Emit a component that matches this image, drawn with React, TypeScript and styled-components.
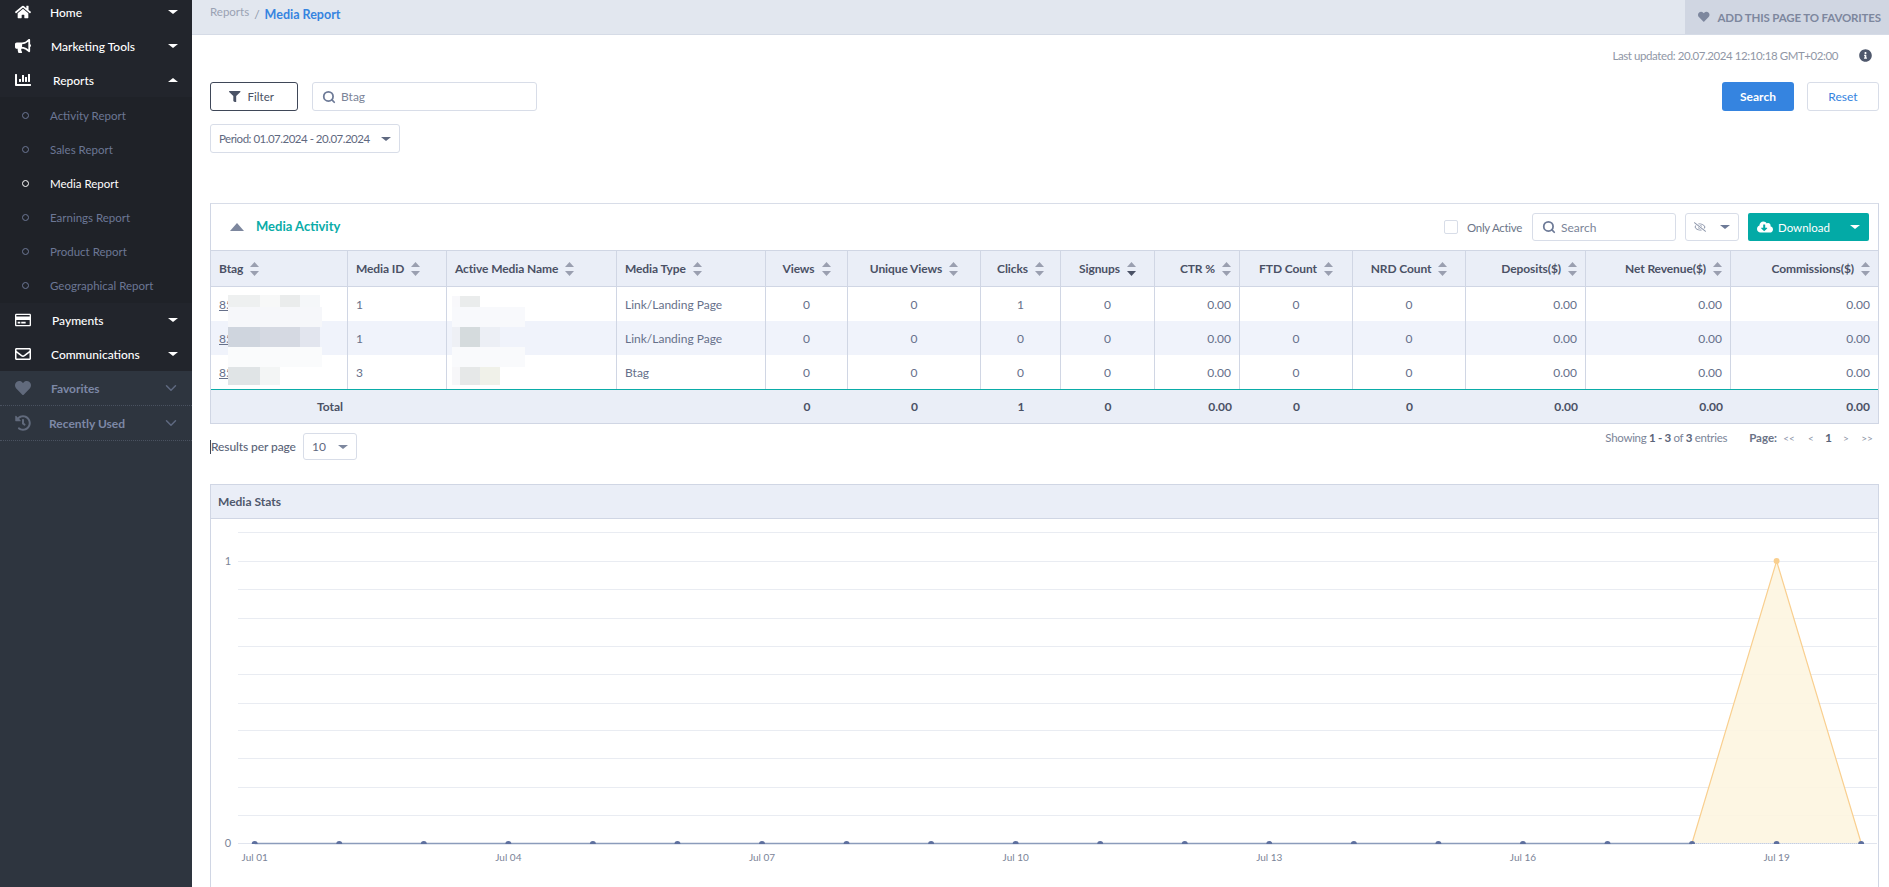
import styled, { createGlobalStyle } from 'styled-components';
import type { ReactNode } from 'react';
import {
  FaHome,
  FaBullhorn,
  FaChartBar,
  FaRegCreditCard,
  FaRegEnvelope,
  FaHeart,
  FaHistory,
  FaFilter,
  FaInfoCircle,
  FaCloudDownloadAlt,
  FaRegEyeSlash,
} from 'react-icons/fa';
import { FiChevronDown, FiSearch } from 'react-icons/fi';

const GlobalStyle = createGlobalStyle`
  html, body {
    margin: 0;
    padding: 0;
    height: 887px;
    overflow: hidden;
    background: #fff;
    font-family: Lato, "Noto Sans", "Liberation Sans", sans-serif;
    font-size: 12px;
    color: #5f6980;
  }
  * { box-sizing: border-box; }
`;

const Page = styled.div`
  display: flex;
  height: 887px;
  overflow: hidden;
`;

/* sidebar */
const Sidebar = styled.aside`
  width: 192px;
  flex: none;
  background: #2e353f;
`;

const MainMenu = styled.div`
  margin-top: -5px;
  background: #22252c;
`;

const MenuRow = styled.div`
  height: 34px;
  display: flex;
  align-items: center;
  color: #fff;
  font-weight: 500;
  font-size: 12px;
  position: relative;
`;

const MenuIcon = styled.span`
  width: 50px;
  padding-left: 15px;
  flex: none;
  display: flex;
  font-size: 16px;
`;

const MenuLabel = styled.span<{ $nudge?: number }>`
  margin-left: ${p => p.$nudge ?? 0}px;
  flex: 1;
`;

const SubMenu = styled.div`
  background: #1f2228;
  padding: 1px 0;
`;

const SubRow = styled.div<{ $active?: boolean }>`
  height: 34px;
  display: flex;
  align-items: center;
  font-size: 11.5px;
  color: ${p => (p.$active ? '#fff' : '#6c7795')};
`;

const SubDot = styled.span`
  width: 7px;
  height: 7px;
  border: 1.5px solid currentColor;
  border-radius: 50%;
  margin: 0 21px 0 22px;
`;

const SecondaryRow = styled.div`
  height: 35px;
  display: flex;
  align-items: center;
  color: #7d88a6;
  font-weight: 700;
  font-size: 12px;
  border-bottom: 1px dotted #4a5260;
`;

const DimIcon = styled(MenuIcon)`
  color: #616a7c;
`;

const ChevronSlot = styled.span`
  margin-right: 12px;
  display: flex;
  font-size: 18px;
  color: #5f6980;
  stroke-width: 3;
`;

const Caret = styled.span<{ $up?: boolean; $color?: string; $size?: number }>`
  display: inline-block;
  flex: none;
  width: 0;
  height: 0;
  border-left: ${p => p.$size ?? 5}px solid transparent;
  border-right: ${p => p.$size ?? 5}px solid transparent;
  ${p => (p.$up ? 'border-bottom' : 'border-top')}: ${p => (p.$size ?? 5) - 1}px solid ${p => p.$color ?? '#fff'};
`;

const MenuCaret = styled(Caret)`
  margin-right: 14px;
`;

const SectionCaret = styled(Caret)`
  border-bottom-width: 8px;
`;

/* top bar */
const Main = styled.main`
  flex: 1;
  min-width: 0;
`;

const TopBar = styled.header`
  height: 35px;
  display: flex;
  justify-content: space-between;
  background: #e2e7ef;
  border-bottom: 1px solid #d5dbe6;
  padding-left: 18px;
`;

const Crumbs = styled.div`
  display: flex;
  align-items: baseline;
  padding-top: 4px;
`;

const CrumbRoot = styled.span`
  color: #9aa2b3;
  font-size: 11.5px;
`;

const CrumbSep = styled.span`
  color: #8d97aa;
  margin: 0 5px 0 5px;
  position: relative;
  top: 3px;
`;

const CrumbCurrent = styled.span`
  color: #3584e0;
  font-weight: 700;
  font-size: 12.5px;
  position: relative;
  top: 3px;
`;

const FavoriteButton = styled.div`
  width: 204px;
  height: 34px;
  display: flex;
  align-items: center;
  gap: 8px;
  padding-left: 13px;
  background: #d0d6e2;
  color: #7d879e;
  font-weight: 700;
  font-size: 11.5px;
  letter-spacing: -0.15px;
  text-transform: uppercase;
  white-space: nowrap;
`;

/* content */
const Content = styled.div`
  padding: 0 10px 0 18px;
`;

const MetaRow = styled.div`
  height: 20px;
  margin-top: 10px;
  display: flex;
  justify-content: flex-end;
  align-items: center;
  color: #9097a6;
  font-size: 11.5px;
  letter-spacing: -0.42px;
  gap: 21px;
  padding-right: 7px;
`;

const InfoIcon = styled(FaInfoCircle)`
  color: #4f586c;
  font-size: 13px;
`;

const FilterRow = styled.div`
  margin-top: 17px;
  display: flex;
  align-items: center;
`;

const FilterButton = styled.div`
  width: 88px;
  height: 29px;
  display: flex;
  align-items: center;
  justify-content: center;
  gap: 7px;
  border: 1px solid #3f4758;
  border-radius: 3px;
  color: #4a5265;
  font-size: 11.5px;
  padding-right: 5px;
`;

const InputBox = styled.div<{ $width: number; $height?: number }>`
  width: ${p => p.$width}px;
  height: ${p => p.$height ?? 29}px;
  display: flex;
  align-items: center;
  gap: 5px;
  padding-left: 9px;
  border: 1px solid #d8dde8;
  border-radius: 3px;
  color: #7b8498;
  background: #fff;
`;

const SearchGlyph = styled(FiSearch)`
  color: #6d7a97;
  font-size: 14px;
  stroke-width: 3;
`;

const BtagInput = styled(InputBox)`
  margin-left: 14px;
`;

const RightGroup = styled.div`
  margin-left: auto;
  display: flex;
  gap: 13px;
`;

const PrimaryButton = styled.div`
  width: 72px;
  height: 29px;
  display: flex;
  align-items: center;
  justify-content: center;
  border-radius: 3px;
  background: #3584e0;
  color: #fff;
  font-weight: 700;
`;

const GhostButton = styled(PrimaryButton)`
  background: #fff;
  border: 1px solid #d8dde8;
  color: #3584e0;
  font-weight: 400;
`;

const SelectBox = styled.div<{ $width: number; $height?: number }>`
  width: ${p => p.$width}px;
  height: ${p => p.$height ?? 29}px;
  display: flex;
  align-items: center;
  justify-content: space-between;
  padding: 0 8px;
  border: 1px solid #d8dde8;
  border-radius: 3px;
  color: #5f6980;
  white-space: nowrap;
`;

const PeriodSelect = styled(SelectBox)`
  margin-top: 13px;
  font-size: 11.5px;
  letter-spacing: -0.5px;
`;

/* activity table */
const Section = styled.section`
  position: relative;
  margin-top: 50px;
  border: 1px solid #d0d6e4;
  border-top-color: #d8dde8;
`;

const SectionHead = styled.div`
  height: 46px;
  display: flex;
  align-items: center;
  padding: 0 9px 0 19px;
`;

const SectionTitle = styled.span`
  margin-left: 12px;
  color: #0aaca8;
  font-weight: 700;
  font-size: 13px;
  position: relative;
  top: -1px;
`;

const HeadTools = styled.div`
  margin-left: auto;
  display: flex;
  align-items: center;
`;

const CheckBox = styled.span`
  width: 14px;
  height: 14px;
  border: 1px solid #d8dde8;
  border-radius: 2px;
  margin-right: 9px;
`;

const OnlyActive = styled.span`
  margin-right: 10px;
  color: #6d7689;
  font-size: 11.5px;
  letter-spacing: -0.3px;
`;

const ToolSelect = styled(SelectBox)`
  margin: 0 9px;
  color: #8a93a8;
`;

const DownloadButton = styled.div`
  width: 121px;
  height: 28px;
  display: flex;
  align-items: center;
  padding: 0 9px;
  gap: 5px;
  border-radius: 2px;
  background: #03aaa6;
  color: #fff;
  font-size: 11.5px;
`;

const DownloadCaret = styled(Caret)`
  margin-left: auto;
`;

const Table = styled.table`
  width: 1667px;
  table-layout: fixed;
  border-collapse: separate;
  border-spacing: 0;
`;

const HeadCell = styled.th<{ $align: string }>`
  height: 37px;
  padding: 0 8px;
  background: #eaeef7;
  border-top: 1px solid #d0d6e4;
  border-bottom: 1px solid #d0d6e4;
  border-right: 1px solid #d0d6e4;
  text-align: ${p => p.$align};
  color: #4a5165;
  font-weight: 700;
  font-size: 12px;
  letter-spacing: -0.1px;
  white-space: nowrap;
  &:last-child { border-right: 0; }
`;

const SortIcon = styled.svg`
  width: 9px;
  height: 14px;
  margin-left: 7px;
  vertical-align: -3px;
`;

const Row = styled.tr<{ $striped: boolean }>`
  background: ${p => (p.$striped ? '#f0f3fb' : '#fff')};
`;

const BodyCell = styled.td<{ $align: string }>`
  height: 34px;
  padding: 0 8px;
  border-right: 1px solid #d0d6e4;
  text-align: ${p => p.$align};
  color: #66708a;
  font-size: 12px;
  &:last-child { border-right: 0; }
`;

const BtagLink = styled.span`
  text-decoration: underline;
`;

const TotalCell = styled.td<{ $align: string }>`
  height: 34px;
  padding: 0 8px;
  background: #eaeef7;
  border-top: 1px solid #0aaca8;
  text-align: ${p => p.$align};
  color: #4a5165;
  font-weight: 700;
`;

const TotalLabel = styled(TotalCell)`
  padding-right: 5px;
`;

/* redacted patches lying over the cells */
const Smudge = styled.span<{ $x: number; $y: number; $w: number; $h: number; $c: string }>`
  position: absolute;
  left: ${p => p.$x - 211}px;
  top: ${p => p.$y - 204}px;
  width: ${p => p.$w}px;
  height: ${p => p.$h}px;
  background: ${p => p.$c};
`;

/* pager */
const FooterRow = styled.div`
  margin-top: 9px;
  height: 27px;
  display: flex;
  justify-content: space-between;
`;

const PerPage = styled.div`
  display: flex;
  align-items: center;
  color: #5b6478;
`;

const PerPageLabel = styled.span`
  width: 93px;
  border-left: 1px solid #3f4758;
  line-height: 14px;
  letter-spacing: -0.1px;
  font-weight: 500;
`;

const Pager = styled.div`
  display: flex;
  color: #7b8498;
  padding-right: 1px;
  line-height: 10px;
`;

const Showing = styled.span`
  font-size: 11.5px;
  letter-spacing: -0.3px;
`;

const ShowingStrong = styled.b`
  color: #5b6478;
`;

const PageLabel = styled.b`
  color: #6b7387;
  margin-left: 22px;
  font-size: 11.5px;
`;

const PageLink = styled.span<{ $width: number; $current?: boolean }>`
  width: ${p => p.$width}px;
  text-align: center;
  font-size: ${p => (p.$current ? 12 : 10)}px;
  font-weight: ${p => (p.$current ? 700 : 400)};
  color: ${p => (p.$current ? '#5b6478' : '#8b93a6')};
`;

/* stats */
const StatsPanel = styled.section`
  margin-top: 24px;
  border: 1px solid #d0d6e4;
  border-bottom: 0;
`;

const StatsHead = styled.div`
  height: 34px;
  display: flex;
  align-items: center;
  padding-left: 7px;
  background: #eaeef7;
  border-bottom: 1px solid #d0d6e4;
  color: #4f586c;
  font-weight: 700;
  font-size: 12px;
`;

const ChartSvg = styled.svg`
  display: block;
  width: 1667px;
  height: 368px;
  font-family: Lato, "Noto Sans", "Liberation Sans", sans-serif;
`;

const columns: { title: string; width: number; align: string; sort?: boolean }[] = [
  { title: 'Btag', width: 137, align: 'left' },
  { title: 'Media ID', width: 99, align: 'left' },
  { title: 'Active Media Name', width: 170, align: 'left' },
  { title: 'Media Type', width: 149, align: 'left' },
  { title: 'Views', width: 82, align: 'center' },
  { title: 'Unique Views', width: 133, align: 'center' },
  { title: 'Clicks', width: 80, align: 'center' },
  { title: 'Signups', width: 94, align: 'center', sort: true },
  { title: 'CTR %', width: 85, align: 'right' },
  { title: 'FTD Count', width: 113, align: 'center' },
  { title: 'NRD Count', width: 113, align: 'center' },
  { title: 'Deposits($)', width: 120, align: 'right' },
  { title: 'Net Revenue($)', width: 145, align: 'right' },
  { title: 'Commissions($)', width: 147, align: 'right' },
];

const rows = [
  ['85', '1', '', 'Link/Landing Page', '0', '0', '1', '0', '0.00', '0', '0', '0.00', '0.00', '0.00'],
  ['85', '1', '', 'Link/Landing Page', '0', '0', '0', '0', '0.00', '0', '0', '0.00', '0.00', '0.00'],
  ['85', '3', '', 'Btag', '0', '0', '0', '0', '0.00', '0', '0', '0.00', '0.00', '0.00'],
];

const totals = ['Total', '', '', '', '0', '0', '1', '0', '0.00', '0', '0', '0.00', '0.00', '0.00'];

const smudges: [number, number, number, number, string][] = [
  [228, 295, 32, 12, '#eef0f0'],
  [260, 295, 20, 12, '#f7f8f8'],
  [280, 295, 20, 12, '#eaecec'],
  [300, 295, 20, 12, '#f5f7f9'],
  [228, 307, 94, 20, '#f6f7fa'],
  [228, 327, 32, 20, '#cfd5de'],
  [260, 327, 40, 20, '#d5d9e2'],
  [300, 327, 20, 20, '#e2e5ee'],
  [228, 347, 94, 20, '#fafbfc'],
  [228, 367, 32, 18, '#e0e4e6'],
  [260, 367, 20, 18, '#f3f5f5'],
  [452, 296, 8, 11, '#f8f8fb'],
  [460, 296, 20, 11, '#eaecec'],
  [452, 307, 73, 20, '#f8f9fc'],
  [452, 327, 8, 20, '#eef0f5'],
  [460, 327, 20, 20, '#d5dbdd'],
  [480, 327, 20, 20, '#eceff5'],
  [452, 347, 73, 20, '#f9fafc'],
  [452, 367, 8, 18, '#f7f7f9'],
  [460, 367, 20, 18, '#e6e8e8'],
  [480, 367, 20, 18, '#f0f1e9'],
];

const gridLines = [533, 562, 590, 619, 647, 675, 704, 731, 759, 788, 816];
const pointX = Array.from({ length: 20 }, (_, i) => 254.7 + i * 84.55);
const xLabels = ['Jul 01', 'Jul 04', 'Jul 07', 'Jul 10', 'Jul 13', 'Jul 16', 'Jul 19'];

function Sort({ active }: { active?: boolean }) {
  return (
    <SortIcon viewBox="0 0 9 14">
      <path d="M4.5 0 L9 5 H0 Z" fill="#9a9fb0" />
      <path d="M4.5 14 L9 9 H0 Z" fill={active ? '#4a5165' : '#9a9fb0'} />
    </SortIcon>
  );
}

function Menu({ icon, label, nudge, up }: { icon: ReactNode; label: string; nudge?: number; up?: boolean }) {
  return (
    <MenuRow>
      <MenuIcon>{icon}</MenuIcon>
      <MenuLabel $nudge={nudge}>{label}</MenuLabel>
      <MenuCaret $up={up} />
    </MenuRow>
  );
}

function Secondary({ icon, label, nudge }: { icon: ReactNode; label: string; nudge?: number }) {
  return (
    <SecondaryRow>
      <DimIcon>{icon}</DimIcon>
      <MenuLabel $nudge={nudge}>{label}</MenuLabel>
      <ChevronSlot>
        <FiChevronDown />
      </ChevronSlot>
    </SecondaryRow>
  );
}

function Chart() {
  const peak = pointX[18];
  return (
    <ChartSvg viewBox="211 520 1667 368">
      {gridLines.map(y => (
        <line key={y} x1={238} x2={1877} y1={y + 0.5} y2={y + 0.5} stroke="#e9ecf2" />
      ))}
      <line x1={238} x2={1877} y1={844.5} y2={844.5} stroke="#e1e5ee" />
      <path d={`M${pointX[17]} 844 L${peak} 562 L${pointX[19]} 844 Z`} fill="#fdf5e0" fillOpacity={0.9} />
      <path d={`M${pointX[17]} 844 L${peak} 562 L${pointX[19]} 844`} fill="none" stroke="#f9cf8f" strokeWidth={1.2} />
      <line x1={pointX[0]} x2={pointX[17]} y1={844.5} y2={844.5} stroke="#8b9cbb" strokeWidth={1.5} />
      <line x1={pointX[17]} x2={pointX[19]} y1={844.5} y2={844.5} stroke="#c3cde0" strokeDasharray="1 1" />
      {pointX.map((x, i) => (
        <path key={i} d={`M${x - 3} 845 A3 3 0 0 1 ${x + 3} 845 Z`} fill="#5d6f9e" />
      ))}
      <circle cx={peak} cy={562} r={3} fill="#f9cf8f" />
      <text x={228} y={566} fontSize={11} textAnchor="middle" fill="#7b8498">1</text>
      <text x={228} y={848} fontSize={11} textAnchor="middle" fill="#7b8498">0</text>
      {xLabels.map((label, i) => (
        <text key={label} x={pointX[i * 3]} y={862} fontSize={10} textAnchor="middle" fill="#7b8498">
          {label}
        </text>
      ))}
    </ChartSvg>
  );
}

export default function App() {
  return (
    <Page>
      <GlobalStyle />
      <Sidebar>
        <MainMenu>
          <Menu icon={<FaHome />} label="Home" />
          <Menu icon={<FaBullhorn />} label="Marketing Tools" nudge={1} />
          <Menu icon={<FaChartBar />} label="Reports" nudge={3} up />
          <SubMenu>
            <SubRow><SubDot />Activity Report</SubRow>
            <SubRow><SubDot />Sales Report</SubRow>
            <SubRow $active><SubDot />Media Report</SubRow>
            <SubRow><SubDot />Earnings Report</SubRow>
            <SubRow><SubDot />Product Report</SubRow>
            <SubRow><SubDot />Geographical Report</SubRow>
          </SubMenu>
          <Menu icon={<FaRegCreditCard />} label="Payments" nudge={2} />
          <Menu icon={<FaRegEnvelope />} label="Communications" nudge={1} />
        </MainMenu>
        <Secondary icon={<FaHeart />} label="Favorites" nudge={1} />
        <Secondary icon={<FaHistory />} label="Recently Used" nudge={-1} />
      </Sidebar>
      <Main>
        <TopBar>
          <Crumbs>
            <CrumbRoot>Reports</CrumbRoot>
            <CrumbSep>/</CrumbSep>
            <CrumbCurrent>Media Report</CrumbCurrent>
          </Crumbs>
          <FavoriteButton>
            <FaHeart />
            Add this page to favorites
          </FavoriteButton>
        </TopBar>
        <Content>
          <MetaRow>
            <span>Last updated: 20.07.2024 12:10:18 GMT+02:00</span>
            <InfoIcon />
          </MetaRow>
          <FilterRow>
            <FilterButton>
              <FaFilter />
              Filter
            </FilterButton>
            <BtagInput $width={225}>
              <SearchGlyph />
              Btag
            </BtagInput>
            <RightGroup>
              <PrimaryButton>Search</PrimaryButton>
              <GhostButton>Reset</GhostButton>
            </RightGroup>
          </FilterRow>
          <PeriodSelect $width={190}>
            Period: 01.07.2024 - 20.07.2024
            <Caret $color="#5f6980" />
          </PeriodSelect>

          <Section>
            <SectionHead>
              <SectionCaret $up $color="#7d879e" $size={7} />
              <SectionTitle>Media Activity</SectionTitle>
              <HeadTools>
                <CheckBox />
                <OnlyActive>Only Active</OnlyActive>
                <InputBox $width={144} $height={28}>
                  <SearchGlyph />
                  Search
                </InputBox>
                <ToolSelect $width={54} $height={28}>
                  <FaRegEyeSlash />
                  <Caret $color="#6d7a97" />
                </ToolSelect>
                <DownloadButton>
                  <FaCloudDownloadAlt size={16} />
                  Download
                  <DownloadCaret />
                </DownloadButton>
              </HeadTools>
            </SectionHead>
            <Table>
              <colgroup>
                {columns.map(c => (
                  <col key={c.title} width={c.width} />
                ))}
              </colgroup>
              <thead>
                <tr>
                  {columns.map(c => (
                    <HeadCell key={c.title} $align={c.align}>
                      {c.title}
                      <Sort active={c.sort} />
                    </HeadCell>
                  ))}
                </tr>
              </thead>
              <tbody>
                {rows.map((row, r) => (
                  <Row key={r} $striped={r === 1}>
                    {row.map((value, i) => (
                      <BodyCell key={i} $align={columns[i].align}>
                        {i === 0 ? <BtagLink>{value}</BtagLink> : value}
                      </BodyCell>
                    ))}
                  </Row>
                ))}
                <tr>
                  {totals.map((value, i) =>
                    i === 0 ? (
                      <TotalLabel key={i} $align="right">{value}</TotalLabel>
                    ) : (
                      <TotalCell key={i} $align={columns[i].align}>{value}</TotalCell>
                    ),
                  )}
                </tr>
              </tbody>
            </Table>
            {smudges.map(([x, y, w, h, c], i) => (
              <Smudge key={i} $x={x} $y={y} $w={w} $h={h} $c={c} />
            ))}
          </Section>

          <FooterRow>
            <PerPage>
              <PerPageLabel>Results per page</PerPageLabel>
              <SelectBox $width={54} $height={27}>
                10
                <Caret $color="#7d879e" />
              </SelectBox>
            </PerPage>
            <Pager>
              <Showing>
                Showing <ShowingStrong>1 - 3</ShowingStrong> of <ShowingStrong>3</ShowingStrong> entries
              </Showing>
              <PageLabel>Page:</PageLabel>
              <PageLink $width={24}>&lt;&lt;</PageLink>
              <PageLink $width={20}>&lt;</PageLink>
              <PageLink $width={15} $current>1</PageLink>
              <PageLink $width={20}>&gt;</PageLink>
              <PageLink $width={22}>&gt;&gt;</PageLink>
            </Pager>
          </FooterRow>

          <StatsPanel>
            <StatsHead>Media Stats</StatsHead>
            <Chart />
          </StatsPanel>
        </Content>
      </Main>
    </Page>
  );
}
